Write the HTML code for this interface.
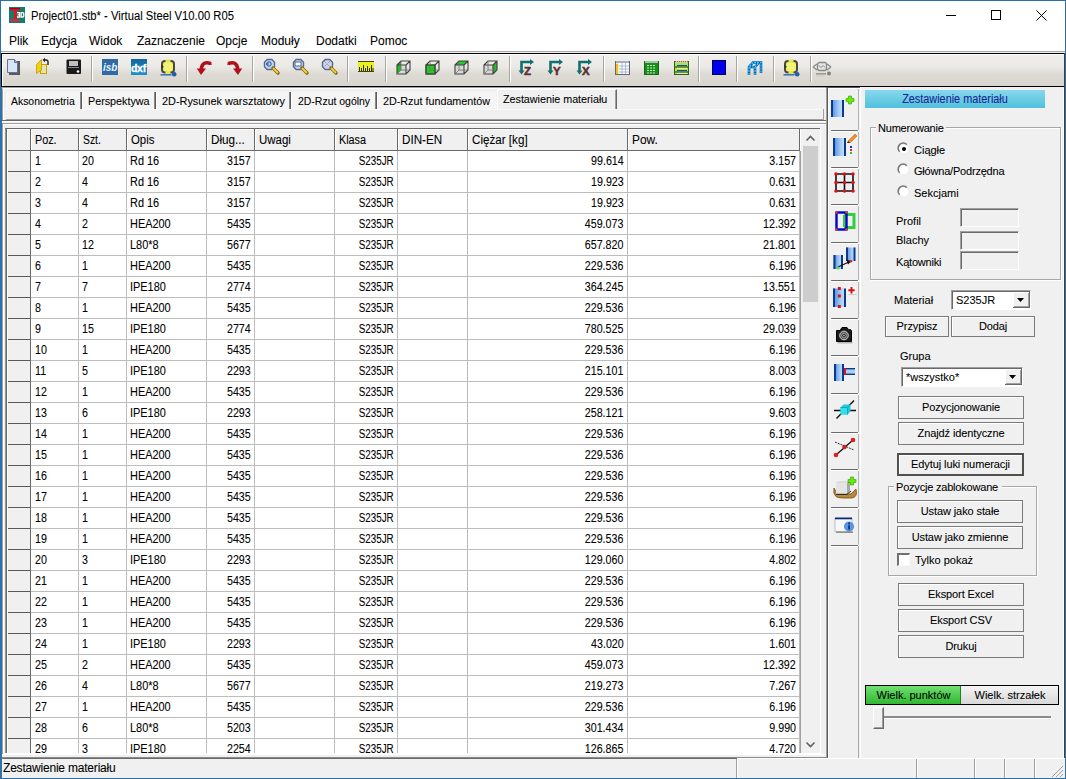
<!DOCTYPE html><html><head><meta charset="utf-8"><style>
*{margin:0;padding:0;box-sizing:border-box}
html,body{width:1066px;height:779px;overflow:hidden;background:#f0f0f0}
body{position:relative;font-family:"Liberation Sans",sans-serif;font-size:12px;color:#000}
div{position:absolute}
.t{white-space:nowrap;line-height:14px;height:14px;-webkit-text-stroke:0.08px #000}
.s{font-size:11px;line-height:13px;height:13px;letter-spacing:-0.1px}
.btn{border:1px solid #7a7a7a;background:#f0f0f0;box-shadow:inset 1px 1px 0 #fff}
.btn .t{width:100%;text-align:center}
svg{position:absolute;overflow:visible}
</style></head><body><div style="left:0px;top:0px;width:1066px;height:51px;background:#fff"></div>
<div style="left:0px;top:0px;width:1066px;height:1px;background:#2b6fab"></div>
<div style="left:0px;top:0px;width:1px;height:779px;background:#2b6fab"></div>
<div style="left:1065px;top:0px;width:1px;height:779px;background:#2b6fab"></div>
<div style="left:0px;top:778px;width:1066px;height:1px;background:#2b6fab"></div>
<svg style="left:9px;top:7px" width="16" height="16" viewBox="0 0 16 16"><rect width="16" height="16" fill="#17796f"/><rect x="1" y="1" width="10" height="2.5" fill="#e0101a"/><rect x="1" y="1" width="10" height="1" fill="#a00010"/><rect x="5" y="3.5" width="2.6" height="9" fill="#f01018"/><rect x="1" y="12" width="10" height="3" fill="#a04048"/><rect x="8" y="5" width="7" height="5.5" fill="#17796f"/><path d="M8 5.6H10.6V10H8M8.6 7.8H10.6" fill="none" stroke="#fff" stroke-width="1.3"/><path d="M12.2 5.6H13.8Q14.8 5.6 14.8 6.8V8.8Q14.8 10 13.8 10H12.2Z" fill="none" stroke="#fff" stroke-width="1.3"/></svg>
<div class="t" style="left:31px;top:9px;transform:scaleX(0.937);transform-origin:0 0">Project01.stb* - Virtual Steel V10.00 R05</div>
<div style="left:946px;top:15px;width:10px;height:1px;background:#000"></div>
<div style="left:991px;top:10px;width:10px;height:10px;border:1px solid #000"></div>
<svg style="left:1036px;top:10px" width="11" height="11" viewBox="0 0 11 11"><path d="M0.5 0.5L10.5 10.5M10.5 0.5L0.5 10.5" stroke="#000" stroke-width="1"/></svg>
<div class="t" style="left:9px;top:34px;">Plik</div>
<div class="t" style="left:41px;top:34px;">Edycja</div>
<div class="t" style="left:89px;top:34px;">Widok</div>
<div class="t" style="left:137px;top:34px;">Zaznaczenie</div>
<div class="t" style="left:216px;top:34px;">Opcje</div>
<div class="t" style="left:261px;top:34px;">Moduły</div>
<div class="t" style="left:316px;top:34px;">Dodatki</div>
<div class="t" style="left:370px;top:34px;">Pomoc</div>
<div style="left:1px;top:51px;width:1064px;height:1px;background:#a9a9a9"></div>
<div style="left:1px;top:53px;width:1064px;height:34px;border:1px solid #000;background:linear-gradient(#f1f0ee,#ebe9e5 40%,#dedbd5 62%,#d8d5cf);box-shadow:inset 1px 1px 0 #fff"></div>
<svg style="left:6px;top:58px" width="16" height="18" viewBox="0 0 16 18"><rect x="3" y="3" width="11" height="14" fill="#555a64"/><path d="M1.5 1.5H8.5L11.5 4.5V14.5H1.5Z" fill="#d6e5fa" stroke="#6a7384"/><path d="M8.5 1.5V4.5H11.5" fill="#9fb0c8" stroke="#6a7384"/></svg>
<svg style="left:35px;top:57px" width="16" height="18" viewBox="0 0 16 18"><rect x="5.5" y="7.5" width="6" height="9" fill="#f4e27a" stroke="#c8a000"/><rect x="7" y="9.5" width="3" height="5" fill="#d0e0f4"/><path d="M1.5 7.5L6.5 2.5V13L1.5 16.5Z" fill="#f0d010" stroke="#c09a00" stroke-width="0.8"/><path d="M13 8V4.8Q13 3 11 3H9.5" fill="none" stroke="#202020" stroke-width="1.4"/><path d="M7.5 3L10 0.8V5.2Z" fill="#202020"/></svg>
<svg style="left:66px;top:59px" width="16" height="16" viewBox="0 0 16 16"><rect x="0.5" y="0.5" width="14.5" height="14.5" rx="1" fill="#1a1a1a"/><rect x="3" y="2" width="9" height="5" fill="#c0c0c0"/><rect x="2" y="8" width="11" height="1" fill="#8a8a8a"/><circle cx="12" cy="12.5" r="1.3" fill="#fff"/></svg>
<div style="left:91px;top:56px;width:1px;height:26px;background:#a8a6a0"></div>
<div style="left:92px;top:56px;width:1px;height:26px;background:#fff"></div>
<svg style="left:102px;top:59px" width="16" height="16" viewBox="0 0 16 16"><rect width="16" height="16" fill="#2f6aa6"/><text x="1" y="12" font-family="Liberation Sans" font-size="10" font-weight="bold" font-style="italic" fill="#e8f2ff">isb</text></svg>
<svg style="left:131px;top:59px" width="16" height="16" viewBox="0 0 16 16"><defs><linearGradient id="gd" x1="0" y1="0" x2="0" y2="1"><stop offset="0" stop-color="#1464a0"/><stop offset="1" stop-color="#2090c8"/></linearGradient></defs><rect width="16" height="16" fill="url(#gd)"/><text x="0" y="12.5" font-family="Liberation Sans" font-size="10.5" font-weight="bold" fill="#fff" letter-spacing="-0.3" stroke="#fff" stroke-width="0.3">dxf</text></svg>
<svg style="left:160px;top:59px" width="17" height="18" viewBox="0 0 17 18"><rect x="2" y="2" width="12" height="11.5" rx="3" fill="#eef060" stroke="#4a4a44" stroke-width="2"/><rect x="5.5" y="0.5" width="5" height="3" fill="#e4e850"/><rect x="5.5" y="12" width="5" height="3" fill="#e4e850"/><rect x="4" y="4" width="8" height="8" fill="#f2f278"/><path d="M1 5.5L4 7.8L1 10Z" fill="#3a3a34"/><rect x="0.5" y="15" width="11" height="1.6" fill="#3a78c0"/><circle cx="14.2" cy="15.2" r="2.3" fill="#1a60b0"/></svg>
<div style="left:186px;top:56px;width:1px;height:26px;background:#a8a6a0"></div>
<div style="left:187px;top:56px;width:1px;height:26px;background:#fff"></div>
<svg style="left:196px;top:60px" width="16" height="16" viewBox="0 0 16 16"><path d="M14.5 3.5Q9 1.5 6.5 5Q5.3 7 5.5 9.5" fill="none" stroke="#b0101a" stroke-width="3.6"/><path d="M0.8 8.5L10 8.5L5 15Z" fill="#b0101a"/><path d="M14.5 2L15 5" stroke="#b0101a" stroke-width="1.5"/></svg>
<svg style="left:227px;top:60px" width="16" height="16" viewBox="0 0 16 16"><path d="M1.5 3.5Q7 1.5 9.5 5Q10.7 7 10.5 9.5" fill="none" stroke="#b0101a" stroke-width="3.6"/><path d="M15.2 8.5L6 8.5L11 15Z" fill="#b0101a"/><path d="M1.5 2L1 5" stroke="#b0101a" stroke-width="1.5"/></svg>
<div style="left:252px;top:56px;width:1px;height:26px;background:#a8a6a0"></div>
<div style="left:253px;top:56px;width:1px;height:26px;background:#fff"></div>
<svg style="left:263px;top:58px" width="17" height="18" viewBox="0 0 17 18"><path d="M4.2 1.5H8.8L11.5 4.2V8.8L8.8 11.5H4.2L1.5 8.8V4.2Z" fill="#c4d8f4" stroke="#5a6a88" stroke-width="1.4"/><circle cx="6" cy="6" r="2.2" fill="none" stroke="#2050a0"/><path d="M3 6H6" stroke="#2050a0"/><path d="M10 10L15 15" stroke="#806010" stroke-width="3.4" stroke-linecap="round"/><path d="M10 10L15 15" stroke="#f0d040" stroke-width="2"/></svg>
<svg style="left:292px;top:58px" width="17" height="18" viewBox="0 0 17 18"><path d="M4.2 1.5H8.8L11.5 4.2V8.8L8.8 11.5H4.2L1.5 8.8V4.2Z" fill="#c4d8f4" stroke="#5a6a88" stroke-width="1.4"/><rect x="3" y="4" width="6" height="4" fill="#fff" stroke="#5060a0"/><path d="M10 10L15 15" stroke="#806010" stroke-width="3.4" stroke-linecap="round"/><path d="M10 10L15 15" stroke="#f0d040" stroke-width="2"/></svg>
<svg style="left:321px;top:58px" width="17" height="18" viewBox="0 0 17 18"><path d="M4.2 1.5H8.8L11.5 4.2V8.8L8.8 11.5H4.2L1.5 8.8V4.2Z" fill="#c4d8f4" stroke="#5a6a88" stroke-width="1.4"/><path d="M3 3L9 9M9 3L3 9" stroke="#d06070" stroke-dasharray="1 1"/><path d="M10 10L15 15" stroke="#806010" stroke-width="3.4" stroke-linecap="round"/><path d="M10 10L15 15" stroke="#f0d040" stroke-width="2"/></svg>
<div style="left:347px;top:56px;width:1px;height:26px;background:#a8a6a0"></div>
<div style="left:348px;top:56px;width:1px;height:26px;background:#fff"></div>
<svg style="left:358px;top:61px" width="16" height="11" viewBox="0 0 16 11"><rect x="0" y="0" width="16" height="11" fill="#e8f020"/><rect x="0" y="0" width="16" height="1" fill="#404020"/><rect x="0" y="10" width="16" height="1" fill="#404020"/><path d="M1.5 10V6M3.5 10V7M5.5 10V4M7.5 10V7M9.5 10V5M11.5 10V7M13.5 10V4M15 10V7" stroke="#303010"/></svg>
<div style="left:385px;top:56px;width:1px;height:26px;background:#a8a6a0"></div>
<div style="left:386px;top:56px;width:1px;height:26px;background:#fff"></div>
<svg style="left:396px;top:60px" width="15" height="15" viewBox="0 0 15 15"><rect x="1" y="5" width="9" height="9" fill="#d8d8d8"/><path d="M1 5L5 1V10L1 14Z" fill="#20c020"/><path d="M1 5L5 1H14V10L10 14H1Z M1 5H10V14 M10 5L14 1" fill="none" stroke="#404040" stroke-width="1.1"/><path d="M5 1V10H14 M5 10L1 14" fill="none" stroke="#707070" stroke-width="0.8"/></svg>
<svg style="left:425px;top:60px" width="15" height="15" viewBox="0 0 15 15"><rect x="1" y="5" width="9" height="9" fill="#d8d8d8"/><rect x="1" y="5" width="9" height="9" fill="#20d020" stroke="#205020"/><path d="M1 5L5 1H14V10L10 14H1Z M1 5H10V14 M10 5L14 1" fill="none" stroke="#404040" stroke-width="1.1"/><path d="M5 1V10H14 M5 10L1 14" fill="none" stroke="#707070" stroke-width="0.8"/></svg>
<svg style="left:454px;top:60px" width="15" height="15" viewBox="0 0 15 15"><rect x="1" y="5" width="9" height="9" fill="#d8d8d8"/><path d="M1 5L5 1H14L10 5Z" fill="#20d020"/><path d="M1 5L5 1H14V10L10 14H1Z M1 5H10V14 M10 5L14 1" fill="none" stroke="#404040" stroke-width="1.1"/><path d="M5 1V10H14 M5 10L1 14" fill="none" stroke="#707070" stroke-width="0.8"/></svg>
<svg style="left:483px;top:60px" width="15" height="15" viewBox="0 0 15 15"><rect x="1" y="5" width="9" height="9" fill="#d8d8d8"/><path d="M10 5L14 1V10L10 14Z" fill="#20c020"/><path d="M1 5L5 1H14V10L10 14H1Z M1 5H10V14 M10 5L14 1" fill="none" stroke="#404040" stroke-width="1.1"/><path d="M5 1V10H14 M5 10L1 14" fill="none" stroke="#707070" stroke-width="0.8"/></svg>
<div style="left:509px;top:56px;width:1px;height:26px;background:#a8a6a0"></div>
<div style="left:510px;top:56px;width:1px;height:26px;background:#fff"></div>
<svg style="left:519px;top:59px" width="16" height="16" viewBox="0 0 16 16"><path d="M2.5 13V3H12" fill="none" stroke="#107070" stroke-width="2.6"/><path d="M11 0L15 3L11 6Z" fill="#107070"/><path d="M-0.5 11.5L2.5 15.5L5.5 11.5Z" fill="#107070"/><text x="5" y="15.5" font-family="Liberation Sans" font-size="11.5" font-weight="bold" fill="#5a3030" stroke="#5a3030" stroke-width="0.5">Z</text></svg>
<svg style="left:548px;top:59px" width="16" height="16" viewBox="0 0 16 16"><path d="M2.5 13V3H12" fill="none" stroke="#107070" stroke-width="2.6"/><path d="M11 0L15 3L11 6Z" fill="#107070"/><path d="M-0.5 11.5L2.5 15.5L5.5 11.5Z" fill="#107070"/><text x="5" y="15.5" font-family="Liberation Sans" font-size="11.5" font-weight="bold" fill="#5a3030" stroke="#5a3030" stroke-width="0.5">Y</text></svg>
<svg style="left:577px;top:59px" width="16" height="16" viewBox="0 0 16 16"><path d="M2.5 13V3H12" fill="none" stroke="#107070" stroke-width="2.6"/><path d="M11 0L15 3L11 6Z" fill="#107070"/><path d="M-0.5 11.5L2.5 15.5L5.5 11.5Z" fill="#107070"/><text x="5" y="15.5" font-family="Liberation Sans" font-size="11.5" font-weight="bold" fill="#5a3030" stroke="#5a3030" stroke-width="0.5">X</text></svg>
<div style="left:603px;top:56px;width:1px;height:26px;background:#a8a6a0"></div>
<div style="left:604px;top:56px;width:1px;height:26px;background:#fff"></div>
<svg style="left:615px;top:60px" width="15" height="16" viewBox="0 0 15 16"><rect x="0.5" y="1.5" width="14" height="13" fill="#f8f0a0" stroke="#606878"/><rect x="1" y="1" width="13" height="2" fill="#a8b0c0"/><rect x="4" y="3" width="10" height="11" fill="#fff"/><path d="M4 6H14M4 9H14M4 12H14M7 3V14M10.5 3V14" stroke="#a8b8d8"/><rect x="1" y="4" width="2" height="10" fill="#f0c020"/></svg>
<svg style="left:644px;top:60px" width="15" height="16" viewBox="0 0 15 16"><rect x="0.5" y="1.5" width="14" height="13" fill="#189018" stroke="#206020"/><rect x="1" y="1" width="13" height="2" fill="#a8c0b0"/><path d="M3 5.5H12M3 8H12M3 10.5H12M3 13H12" stroke="#c8f0c8" stroke-dasharray="2 1"/></svg>
<svg style="left:674px;top:60px" width="15" height="16" viewBox="0 0 15 16"><rect x="0.5" y="1.5" width="14" height="13" fill="#a8e840" stroke="#306020"/><rect x="1" y="1" width="13" height="2" fill="#c0d0b0"/><path d="M1 1.5H14" stroke="#e04040" stroke-dasharray="1 1"/><path d="M3 5.5H13M3 10.5H13" stroke="#1050a0"/><path d="M3 8H13M3 13H13" stroke="#fff"/><path d="M1 7H14M1 12H14" stroke="#202020"/></svg>
<div style="left:698px;top:56px;width:1px;height:26px;background:#a8a6a0"></div>
<div style="left:699px;top:56px;width:1px;height:26px;background:#fff"></div>
<svg style="left:712px;top:60px" width="14" height="15" viewBox="0 0 14 15"><rect x="0.5" y="0.5" width="13" height="14" fill="#0000f0" stroke="#000050"/></svg>
<div style="left:736px;top:56px;width:1px;height:26px;background:#a8a6a0"></div>
<div style="left:737px;top:56px;width:1px;height:26px;background:#fff"></div>
<svg style="left:746px;top:60px" width="17" height="16" viewBox="0 0 17 16"><path d="M3 15V7L7 2.5H15V13M9 15V7H3M9 7L13 2.5" fill="none" stroke="#0a60b0" stroke-width="2.6"/><path d="M3 15V7L7 2.5H15V13M9 15V7H3M9 7L13 2.5" fill="none" stroke="#30d0f8" stroke-width="1.2" stroke-dasharray="2 1"/></svg>
<div style="left:773px;top:56px;width:1px;height:26px;background:#a8a6a0"></div>
<div style="left:774px;top:56px;width:1px;height:26px;background:#fff"></div>
<svg style="left:783px;top:59px" width="17" height="18" viewBox="0 0 17 18"><rect x="2" y="2" width="12" height="11.5" rx="3" fill="#eef060" stroke="#4a4a44" stroke-width="2"/><rect x="5.5" y="0.5" width="5" height="3" fill="#e4e850"/><rect x="5.5" y="12" width="5" height="3" fill="#e4e850"/><rect x="4" y="4" width="8" height="8" fill="#f2f278"/><path d="M1 5.5L4 7.8L1 10Z" fill="#3a3a34"/><rect x="0.5" y="15" width="11" height="1.6" fill="#3a78c0"/><circle cx="14.2" cy="15.2" r="2.3" fill="#1a60b0"/></svg>
<div style="left:810px;top:56px;width:1px;height:26px;background:#a8a6a0"></div>
<div style="left:811px;top:56px;width:1px;height:26px;background:#fff"></div>
<svg style="left:812px;top:60px" width="20" height="17" viewBox="0 0 20 17"><path d="M1 7L5 4M1 7L5 10" stroke="#8a8a8a" stroke-width="1.4" fill="none"/><path d="M19 7L15 4M19 7L15 10" stroke="#8a8a8a" stroke-width="1.4" fill="none"/><rect x="5.5" y="2.5" width="9" height="8" rx="2" fill="#e4e4e4" stroke="#8a8a8a" stroke-width="1.3"/><path d="M7 5.5L9 7.5L11 5.5L13 7.5" stroke="#8a8a8a" fill="none"/><rect x="4" y="13" width="10" height="1.6" fill="#9a9a9a"/><circle cx="17" cy="13.5" r="2" fill="#808080"/><rect x="4" y="15.5" width="9" height="1" fill="#c8c8c8"/></svg>
<div style="left:1px;top:87px;width:825px;height:1px;background:#a0a0a0"></div>
<div style="left:2px;top:88px;width:824px;height:34px;border-top:1px solid #fff;border-left:1px solid #a0a0a0;box-shadow:inset 1px 0 0 #fff"></div>
<div style="left:2px;top:120px;width:824px;height:1px;background:#696969"></div>
<div style="left:2px;top:121px;width:826px;height:1px;background:#fff"></div>
<div style="left:6px;top:92px;width:74px;height:17px;background:#f5f5f5"></div>
<div class="t" style="left:11px;top:94px;font-size:11px;transform:scaleX(0.947);transform-origin:0 0">Aksonometria</div>
<div style="left:80px;top:92px;width:1px;height:17px;background:#8a8a8a"></div>
<div style="left:81px;top:92px;width:1px;height:17px;background:#5a5a5a"></div>
<div style="left:82px;top:92px;width:1px;height:17px;background:#fff"></div>
<div style="left:83px;top:92px;width:71px;height:17px;background:#f5f5f5"></div>
<div class="t" style="left:88px;top:94px;font-size:11px;transform:scaleX(0.978);transform-origin:0 0">Perspektywa</div>
<div style="left:154px;top:92px;width:1px;height:17px;background:#8a8a8a"></div>
<div style="left:155px;top:92px;width:1px;height:17px;background:#5a5a5a"></div>
<div style="left:156px;top:92px;width:1px;height:17px;background:#fff"></div>
<div style="left:157px;top:92px;width:132px;height:17px;background:#f5f5f5"></div>
<div class="t" style="left:162px;top:94px;font-size:11px;transform:scaleX(0.99);transform-origin:0 0">2D-Rysunek warsztatowy</div>
<div style="left:289px;top:92px;width:1px;height:17px;background:#8a8a8a"></div>
<div style="left:290px;top:92px;width:1px;height:17px;background:#5a5a5a"></div>
<div style="left:291px;top:92px;width:1px;height:17px;background:#fff"></div>
<div style="left:292px;top:92px;width:83px;height:17px;background:#f5f5f5"></div>
<div class="t" style="left:297.5px;top:94px;font-size:11px;transform:scaleX(0.951);transform-origin:0 0">2D-Rzut ogólny</div>
<div style="left:375px;top:92px;width:1px;height:17px;background:#8a8a8a"></div>
<div style="left:376px;top:92px;width:1px;height:17px;background:#5a5a5a"></div>
<div style="left:377px;top:92px;width:1px;height:17px;background:#fff"></div>
<div style="left:378px;top:92px;width:118px;height:17px;background:#f5f5f5"></div>
<div class="t" style="left:383px;top:94px;font-size:11px;transform:scaleX(0.978);transform-origin:0 0">2D-Rzut fundamentów</div>
<div style="left:497px;top:89px;width:120px;height:21px;background:#f0f0f0;border-left:1px solid #fff;border-top:1px solid #fff;border-right:1px solid #696969;box-shadow:inset -1px 0 0 #a0a0a0"></div>
<div class="t" style="left:503px;top:92px;font-size:11px;transform:scaleX(0.975);transform-origin:0 0">Zestawienie materiału</div>
<div style="left:5px;top:109px;width:820px;height:1px;background:#fafafa"></div>
<div style="left:6px;top:109px;width:818px;height:11px;border-right:1px solid #a0a0a0;border-bottom:1px solid #a0a0a0"></div>
<div style="left:2px;top:123px;width:826px;height:636px;border-top:1px solid #a0a0a0;border-left:1px solid #a0a0a0;border-right:1px solid #696969;border-bottom:1px solid #696969;box-shadow:inset 1px 1px 0 #fff, inset -1px -1px 0 #a0a0a0"></div>
<div style="left:5px;top:128px;width:816px;height:626px;background:#fff;border-top:1px solid #696969;border-left:1px solid #9a9a9a;box-shadow:inset 1px 0 0 #686868"></div>
<div style="left:7px;top:129px;width:1px;height:624px;background:#fff"></div>
<div style="left:8px;top:129px;width:792px;height:21px;background:#f0f0f0;border-top:1px solid #fff"></div>
<div style="left:8px;top:150px;width:792px;height:1px;background:#696969"></div>
<div style="left:8px;top:151px;width:22px;height:602px;background:#f0f0f0"></div>
<div style="left:30px;top:129px;width:1px;height:21px;background:#696969"></div>
<div style="left:31px;top:129px;width:1px;height:21px;background:#fff"></div>
<div style="left:30px;top:151px;width:1px;height:602px;background:#696969"></div>
<div style="left:78px;top:129px;width:1px;height:21px;background:#696969"></div>
<div style="left:79px;top:129px;width:1px;height:21px;background:#fff"></div>
<div style="left:78px;top:151px;width:1px;height:602px;background:#bdbdbd"></div>
<div style="left:126px;top:129px;width:1px;height:21px;background:#696969"></div>
<div style="left:127px;top:129px;width:1px;height:21px;background:#fff"></div>
<div style="left:126px;top:151px;width:1px;height:602px;background:#bdbdbd"></div>
<div style="left:206px;top:129px;width:1px;height:21px;background:#696969"></div>
<div style="left:207px;top:129px;width:1px;height:21px;background:#fff"></div>
<div style="left:206px;top:151px;width:1px;height:602px;background:#bdbdbd"></div>
<div style="left:254px;top:129px;width:1px;height:21px;background:#696969"></div>
<div style="left:255px;top:129px;width:1px;height:21px;background:#fff"></div>
<div style="left:254px;top:151px;width:1px;height:602px;background:#bdbdbd"></div>
<div style="left:334px;top:129px;width:1px;height:21px;background:#696969"></div>
<div style="left:335px;top:129px;width:1px;height:21px;background:#fff"></div>
<div style="left:334px;top:151px;width:1px;height:602px;background:#bdbdbd"></div>
<div style="left:397px;top:129px;width:1px;height:21px;background:#696969"></div>
<div style="left:398px;top:129px;width:1px;height:21px;background:#fff"></div>
<div style="left:397px;top:151px;width:1px;height:602px;background:#bdbdbd"></div>
<div style="left:467px;top:129px;width:1px;height:21px;background:#696969"></div>
<div style="left:468px;top:129px;width:1px;height:21px;background:#fff"></div>
<div style="left:467px;top:151px;width:1px;height:602px;background:#bdbdbd"></div>
<div style="left:627px;top:129px;width:1px;height:21px;background:#696969"></div>
<div style="left:628px;top:129px;width:1px;height:21px;background:#fff"></div>
<div style="left:627px;top:151px;width:1px;height:602px;background:#bdbdbd"></div>
<div style="left:799px;top:129px;width:1px;height:21px;background:#696969"></div>
<div style="left:799px;top:151px;width:1px;height:602px;background:#bdbdbd"></div>
<div style="left:800px;top:151px;width:1px;height:602px;background:#a0a0a0"></div>
<div class="t" style="left:35px;top:133px;transform:scaleX(0.9);transform-origin:0 0">Poz.</div>
<div class="t" style="left:83px;top:133px;transform:scaleX(0.86);transform-origin:0 0">Szt.</div>
<div class="t" style="left:131px;top:133px;transform:scaleX(0.95);transform-origin:0 0">Opis</div>
<div class="t" style="left:211px;top:133px;transform:scaleX(0.975);transform-origin:0 0">Dług...</div>
<div class="t" style="left:259px;top:133px;transform:scaleX(0.955);transform-origin:0 0">Uwagi</div>
<div class="t" style="left:339px;top:133px;transform:scaleX(0.9);transform-origin:0 0">Klasa</div>
<div class="t" style="left:402px;top:133px;transform:scaleX(0.97);transform-origin:0 0">DIN-EN</div>
<div class="t" style="left:472px;top:133px;transform:scaleX(0.97);transform-origin:0 0">Ciężar [kg]</div>
<div class="t" style="left:632px;top:133px;transform:scaleX(0.99);transform-origin:0 0">Pow.</div>
<div style="left:8px;top:171px;width:22px;height:1px;background:#5a5a5a"></div>
<div style="left:31px;top:171px;width:769px;height:1px;background:#bdbdbd"></div>
<div class="t" style="left:35px;top:154px;transform:scaleX(0.89);transform-origin:0 0">1</div>
<div class="t" style="left:82px;top:154px;transform:scaleX(0.89);transform-origin:0 0">20</div>
<div class="t" style="left:130px;top:154px;transform:scaleX(0.91);transform-origin:0 0">Rd 16</div>
<div class="t" style="right:815.5px;top:154px;transform:scaleX(0.89);transform-origin:100% 0">3157</div>
<div class="t" style="right:672px;top:154px;transform:scaleX(0.82);transform-origin:100% 0">S235JR</div>
<div class="t" style="right:442.20000000000005px;top:154px;transform:scaleX(0.89);transform-origin:100% 0">99.614</div>
<div class="t" style="right:270px;top:154px;transform:scaleX(0.89);transform-origin:100% 0">3.157</div>
<div style="left:8px;top:192px;width:22px;height:1px;background:#5a5a5a"></div>
<div style="left:31px;top:192px;width:769px;height:1px;background:#bdbdbd"></div>
<div class="t" style="left:35px;top:175px;transform:scaleX(0.89);transform-origin:0 0">2</div>
<div class="t" style="left:82px;top:175px;transform:scaleX(0.89);transform-origin:0 0">4</div>
<div class="t" style="left:130px;top:175px;transform:scaleX(0.91);transform-origin:0 0">Rd 16</div>
<div class="t" style="right:815.5px;top:175px;transform:scaleX(0.89);transform-origin:100% 0">3157</div>
<div class="t" style="right:672px;top:175px;transform:scaleX(0.82);transform-origin:100% 0">S235JR</div>
<div class="t" style="right:442.20000000000005px;top:175px;transform:scaleX(0.89);transform-origin:100% 0">19.923</div>
<div class="t" style="right:270px;top:175px;transform:scaleX(0.89);transform-origin:100% 0">0.631</div>
<div style="left:8px;top:213px;width:22px;height:1px;background:#5a5a5a"></div>
<div style="left:31px;top:213px;width:769px;height:1px;background:#bdbdbd"></div>
<div class="t" style="left:35px;top:196px;transform:scaleX(0.89);transform-origin:0 0">3</div>
<div class="t" style="left:82px;top:196px;transform:scaleX(0.89);transform-origin:0 0">4</div>
<div class="t" style="left:130px;top:196px;transform:scaleX(0.91);transform-origin:0 0">Rd 16</div>
<div class="t" style="right:815.5px;top:196px;transform:scaleX(0.89);transform-origin:100% 0">3157</div>
<div class="t" style="right:672px;top:196px;transform:scaleX(0.82);transform-origin:100% 0">S235JR</div>
<div class="t" style="right:442.20000000000005px;top:196px;transform:scaleX(0.89);transform-origin:100% 0">19.923</div>
<div class="t" style="right:270px;top:196px;transform:scaleX(0.89);transform-origin:100% 0">0.631</div>
<div style="left:8px;top:234px;width:22px;height:1px;background:#5a5a5a"></div>
<div style="left:31px;top:234px;width:769px;height:1px;background:#bdbdbd"></div>
<div class="t" style="left:35px;top:217px;transform:scaleX(0.89);transform-origin:0 0">4</div>
<div class="t" style="left:82px;top:217px;transform:scaleX(0.89);transform-origin:0 0">2</div>
<div class="t" style="left:130px;top:217px;transform:scaleX(0.91);transform-origin:0 0">HEA200</div>
<div class="t" style="right:815.5px;top:217px;transform:scaleX(0.89);transform-origin:100% 0">5435</div>
<div class="t" style="right:672px;top:217px;transform:scaleX(0.82);transform-origin:100% 0">S235JR</div>
<div class="t" style="right:442.20000000000005px;top:217px;transform:scaleX(0.89);transform-origin:100% 0">459.073</div>
<div class="t" style="right:270px;top:217px;transform:scaleX(0.89);transform-origin:100% 0">12.392</div>
<div style="left:8px;top:255px;width:22px;height:1px;background:#5a5a5a"></div>
<div style="left:31px;top:255px;width:769px;height:1px;background:#bdbdbd"></div>
<div class="t" style="left:35px;top:238px;transform:scaleX(0.89);transform-origin:0 0">5</div>
<div class="t" style="left:82px;top:238px;transform:scaleX(0.89);transform-origin:0 0">12</div>
<div class="t" style="left:130px;top:238px;transform:scaleX(0.91);transform-origin:0 0">L80*8</div>
<div class="t" style="right:815.5px;top:238px;transform:scaleX(0.89);transform-origin:100% 0">5677</div>
<div class="t" style="right:672px;top:238px;transform:scaleX(0.82);transform-origin:100% 0">S235JR</div>
<div class="t" style="right:442.20000000000005px;top:238px;transform:scaleX(0.89);transform-origin:100% 0">657.820</div>
<div class="t" style="right:270px;top:238px;transform:scaleX(0.89);transform-origin:100% 0">21.801</div>
<div style="left:8px;top:276px;width:22px;height:1px;background:#5a5a5a"></div>
<div style="left:31px;top:276px;width:769px;height:1px;background:#bdbdbd"></div>
<div class="t" style="left:35px;top:259px;transform:scaleX(0.89);transform-origin:0 0">6</div>
<div class="t" style="left:82px;top:259px;transform:scaleX(0.89);transform-origin:0 0">1</div>
<div class="t" style="left:130px;top:259px;transform:scaleX(0.91);transform-origin:0 0">HEA200</div>
<div class="t" style="right:815.5px;top:259px;transform:scaleX(0.89);transform-origin:100% 0">5435</div>
<div class="t" style="right:672px;top:259px;transform:scaleX(0.82);transform-origin:100% 0">S235JR</div>
<div class="t" style="right:442.20000000000005px;top:259px;transform:scaleX(0.89);transform-origin:100% 0">229.536</div>
<div class="t" style="right:270px;top:259px;transform:scaleX(0.89);transform-origin:100% 0">6.196</div>
<div style="left:8px;top:297px;width:22px;height:1px;background:#5a5a5a"></div>
<div style="left:31px;top:297px;width:769px;height:1px;background:#bdbdbd"></div>
<div class="t" style="left:35px;top:280px;transform:scaleX(0.89);transform-origin:0 0">7</div>
<div class="t" style="left:82px;top:280px;transform:scaleX(0.89);transform-origin:0 0">7</div>
<div class="t" style="left:130px;top:280px;transform:scaleX(0.91);transform-origin:0 0">IPE180</div>
<div class="t" style="right:815.5px;top:280px;transform:scaleX(0.89);transform-origin:100% 0">2774</div>
<div class="t" style="right:672px;top:280px;transform:scaleX(0.82);transform-origin:100% 0">S235JR</div>
<div class="t" style="right:442.20000000000005px;top:280px;transform:scaleX(0.89);transform-origin:100% 0">364.245</div>
<div class="t" style="right:270px;top:280px;transform:scaleX(0.89);transform-origin:100% 0">13.551</div>
<div style="left:8px;top:318px;width:22px;height:1px;background:#5a5a5a"></div>
<div style="left:31px;top:318px;width:769px;height:1px;background:#bdbdbd"></div>
<div class="t" style="left:35px;top:301px;transform:scaleX(0.89);transform-origin:0 0">8</div>
<div class="t" style="left:82px;top:301px;transform:scaleX(0.89);transform-origin:0 0">1</div>
<div class="t" style="left:130px;top:301px;transform:scaleX(0.91);transform-origin:0 0">HEA200</div>
<div class="t" style="right:815.5px;top:301px;transform:scaleX(0.89);transform-origin:100% 0">5435</div>
<div class="t" style="right:672px;top:301px;transform:scaleX(0.82);transform-origin:100% 0">S235JR</div>
<div class="t" style="right:442.20000000000005px;top:301px;transform:scaleX(0.89);transform-origin:100% 0">229.536</div>
<div class="t" style="right:270px;top:301px;transform:scaleX(0.89);transform-origin:100% 0">6.196</div>
<div style="left:8px;top:339px;width:22px;height:1px;background:#5a5a5a"></div>
<div style="left:31px;top:339px;width:769px;height:1px;background:#bdbdbd"></div>
<div class="t" style="left:35px;top:322px;transform:scaleX(0.89);transform-origin:0 0">9</div>
<div class="t" style="left:82px;top:322px;transform:scaleX(0.89);transform-origin:0 0">15</div>
<div class="t" style="left:130px;top:322px;transform:scaleX(0.91);transform-origin:0 0">IPE180</div>
<div class="t" style="right:815.5px;top:322px;transform:scaleX(0.89);transform-origin:100% 0">2774</div>
<div class="t" style="right:672px;top:322px;transform:scaleX(0.82);transform-origin:100% 0">S235JR</div>
<div class="t" style="right:442.20000000000005px;top:322px;transform:scaleX(0.89);transform-origin:100% 0">780.525</div>
<div class="t" style="right:270px;top:322px;transform:scaleX(0.89);transform-origin:100% 0">29.039</div>
<div style="left:8px;top:360px;width:22px;height:1px;background:#5a5a5a"></div>
<div style="left:31px;top:360px;width:769px;height:1px;background:#bdbdbd"></div>
<div class="t" style="left:35px;top:343px;transform:scaleX(0.89);transform-origin:0 0">10</div>
<div class="t" style="left:82px;top:343px;transform:scaleX(0.89);transform-origin:0 0">1</div>
<div class="t" style="left:130px;top:343px;transform:scaleX(0.91);transform-origin:0 0">HEA200</div>
<div class="t" style="right:815.5px;top:343px;transform:scaleX(0.89);transform-origin:100% 0">5435</div>
<div class="t" style="right:672px;top:343px;transform:scaleX(0.82);transform-origin:100% 0">S235JR</div>
<div class="t" style="right:442.20000000000005px;top:343px;transform:scaleX(0.89);transform-origin:100% 0">229.536</div>
<div class="t" style="right:270px;top:343px;transform:scaleX(0.89);transform-origin:100% 0">6.196</div>
<div style="left:8px;top:381px;width:22px;height:1px;background:#5a5a5a"></div>
<div style="left:31px;top:381px;width:769px;height:1px;background:#bdbdbd"></div>
<div class="t" style="left:35px;top:364px;transform:scaleX(0.89);transform-origin:0 0">11</div>
<div class="t" style="left:82px;top:364px;transform:scaleX(0.89);transform-origin:0 0">5</div>
<div class="t" style="left:130px;top:364px;transform:scaleX(0.91);transform-origin:0 0">IPE180</div>
<div class="t" style="right:815.5px;top:364px;transform:scaleX(0.89);transform-origin:100% 0">2293</div>
<div class="t" style="right:672px;top:364px;transform:scaleX(0.82);transform-origin:100% 0">S235JR</div>
<div class="t" style="right:442.20000000000005px;top:364px;transform:scaleX(0.89);transform-origin:100% 0">215.101</div>
<div class="t" style="right:270px;top:364px;transform:scaleX(0.89);transform-origin:100% 0">8.003</div>
<div style="left:8px;top:402px;width:22px;height:1px;background:#5a5a5a"></div>
<div style="left:31px;top:402px;width:769px;height:1px;background:#bdbdbd"></div>
<div class="t" style="left:35px;top:385px;transform:scaleX(0.89);transform-origin:0 0">12</div>
<div class="t" style="left:82px;top:385px;transform:scaleX(0.89);transform-origin:0 0">1</div>
<div class="t" style="left:130px;top:385px;transform:scaleX(0.91);transform-origin:0 0">HEA200</div>
<div class="t" style="right:815.5px;top:385px;transform:scaleX(0.89);transform-origin:100% 0">5435</div>
<div class="t" style="right:672px;top:385px;transform:scaleX(0.82);transform-origin:100% 0">S235JR</div>
<div class="t" style="right:442.20000000000005px;top:385px;transform:scaleX(0.89);transform-origin:100% 0">229.536</div>
<div class="t" style="right:270px;top:385px;transform:scaleX(0.89);transform-origin:100% 0">6.196</div>
<div style="left:8px;top:423px;width:22px;height:1px;background:#5a5a5a"></div>
<div style="left:31px;top:423px;width:769px;height:1px;background:#bdbdbd"></div>
<div class="t" style="left:35px;top:406px;transform:scaleX(0.89);transform-origin:0 0">13</div>
<div class="t" style="left:82px;top:406px;transform:scaleX(0.89);transform-origin:0 0">6</div>
<div class="t" style="left:130px;top:406px;transform:scaleX(0.91);transform-origin:0 0">IPE180</div>
<div class="t" style="right:815.5px;top:406px;transform:scaleX(0.89);transform-origin:100% 0">2293</div>
<div class="t" style="right:672px;top:406px;transform:scaleX(0.82);transform-origin:100% 0">S235JR</div>
<div class="t" style="right:442.20000000000005px;top:406px;transform:scaleX(0.89);transform-origin:100% 0">258.121</div>
<div class="t" style="right:270px;top:406px;transform:scaleX(0.89);transform-origin:100% 0">9.603</div>
<div style="left:8px;top:444px;width:22px;height:1px;background:#5a5a5a"></div>
<div style="left:31px;top:444px;width:769px;height:1px;background:#bdbdbd"></div>
<div class="t" style="left:35px;top:427px;transform:scaleX(0.89);transform-origin:0 0">14</div>
<div class="t" style="left:82px;top:427px;transform:scaleX(0.89);transform-origin:0 0">1</div>
<div class="t" style="left:130px;top:427px;transform:scaleX(0.91);transform-origin:0 0">HEA200</div>
<div class="t" style="right:815.5px;top:427px;transform:scaleX(0.89);transform-origin:100% 0">5435</div>
<div class="t" style="right:672px;top:427px;transform:scaleX(0.82);transform-origin:100% 0">S235JR</div>
<div class="t" style="right:442.20000000000005px;top:427px;transform:scaleX(0.89);transform-origin:100% 0">229.536</div>
<div class="t" style="right:270px;top:427px;transform:scaleX(0.89);transform-origin:100% 0">6.196</div>
<div style="left:8px;top:465px;width:22px;height:1px;background:#5a5a5a"></div>
<div style="left:31px;top:465px;width:769px;height:1px;background:#bdbdbd"></div>
<div class="t" style="left:35px;top:448px;transform:scaleX(0.89);transform-origin:0 0">15</div>
<div class="t" style="left:82px;top:448px;transform:scaleX(0.89);transform-origin:0 0">1</div>
<div class="t" style="left:130px;top:448px;transform:scaleX(0.91);transform-origin:0 0">HEA200</div>
<div class="t" style="right:815.5px;top:448px;transform:scaleX(0.89);transform-origin:100% 0">5435</div>
<div class="t" style="right:672px;top:448px;transform:scaleX(0.82);transform-origin:100% 0">S235JR</div>
<div class="t" style="right:442.20000000000005px;top:448px;transform:scaleX(0.89);transform-origin:100% 0">229.536</div>
<div class="t" style="right:270px;top:448px;transform:scaleX(0.89);transform-origin:100% 0">6.196</div>
<div style="left:8px;top:486px;width:22px;height:1px;background:#5a5a5a"></div>
<div style="left:31px;top:486px;width:769px;height:1px;background:#bdbdbd"></div>
<div class="t" style="left:35px;top:469px;transform:scaleX(0.89);transform-origin:0 0">16</div>
<div class="t" style="left:82px;top:469px;transform:scaleX(0.89);transform-origin:0 0">1</div>
<div class="t" style="left:130px;top:469px;transform:scaleX(0.91);transform-origin:0 0">HEA200</div>
<div class="t" style="right:815.5px;top:469px;transform:scaleX(0.89);transform-origin:100% 0">5435</div>
<div class="t" style="right:672px;top:469px;transform:scaleX(0.82);transform-origin:100% 0">S235JR</div>
<div class="t" style="right:442.20000000000005px;top:469px;transform:scaleX(0.89);transform-origin:100% 0">229.536</div>
<div class="t" style="right:270px;top:469px;transform:scaleX(0.89);transform-origin:100% 0">6.196</div>
<div style="left:8px;top:507px;width:22px;height:1px;background:#5a5a5a"></div>
<div style="left:31px;top:507px;width:769px;height:1px;background:#bdbdbd"></div>
<div class="t" style="left:35px;top:490px;transform:scaleX(0.89);transform-origin:0 0">17</div>
<div class="t" style="left:82px;top:490px;transform:scaleX(0.89);transform-origin:0 0">1</div>
<div class="t" style="left:130px;top:490px;transform:scaleX(0.91);transform-origin:0 0">HEA200</div>
<div class="t" style="right:815.5px;top:490px;transform:scaleX(0.89);transform-origin:100% 0">5435</div>
<div class="t" style="right:672px;top:490px;transform:scaleX(0.82);transform-origin:100% 0">S235JR</div>
<div class="t" style="right:442.20000000000005px;top:490px;transform:scaleX(0.89);transform-origin:100% 0">229.536</div>
<div class="t" style="right:270px;top:490px;transform:scaleX(0.89);transform-origin:100% 0">6.196</div>
<div style="left:8px;top:528px;width:22px;height:1px;background:#5a5a5a"></div>
<div style="left:31px;top:528px;width:769px;height:1px;background:#bdbdbd"></div>
<div class="t" style="left:35px;top:511px;transform:scaleX(0.89);transform-origin:0 0">18</div>
<div class="t" style="left:82px;top:511px;transform:scaleX(0.89);transform-origin:0 0">1</div>
<div class="t" style="left:130px;top:511px;transform:scaleX(0.91);transform-origin:0 0">HEA200</div>
<div class="t" style="right:815.5px;top:511px;transform:scaleX(0.89);transform-origin:100% 0">5435</div>
<div class="t" style="right:672px;top:511px;transform:scaleX(0.82);transform-origin:100% 0">S235JR</div>
<div class="t" style="right:442.20000000000005px;top:511px;transform:scaleX(0.89);transform-origin:100% 0">229.536</div>
<div class="t" style="right:270px;top:511px;transform:scaleX(0.89);transform-origin:100% 0">6.196</div>
<div style="left:8px;top:549px;width:22px;height:1px;background:#5a5a5a"></div>
<div style="left:31px;top:549px;width:769px;height:1px;background:#bdbdbd"></div>
<div class="t" style="left:35px;top:532px;transform:scaleX(0.89);transform-origin:0 0">19</div>
<div class="t" style="left:82px;top:532px;transform:scaleX(0.89);transform-origin:0 0">1</div>
<div class="t" style="left:130px;top:532px;transform:scaleX(0.91);transform-origin:0 0">HEA200</div>
<div class="t" style="right:815.5px;top:532px;transform:scaleX(0.89);transform-origin:100% 0">5435</div>
<div class="t" style="right:672px;top:532px;transform:scaleX(0.82);transform-origin:100% 0">S235JR</div>
<div class="t" style="right:442.20000000000005px;top:532px;transform:scaleX(0.89);transform-origin:100% 0">229.536</div>
<div class="t" style="right:270px;top:532px;transform:scaleX(0.89);transform-origin:100% 0">6.196</div>
<div style="left:8px;top:570px;width:22px;height:1px;background:#5a5a5a"></div>
<div style="left:31px;top:570px;width:769px;height:1px;background:#bdbdbd"></div>
<div class="t" style="left:35px;top:553px;transform:scaleX(0.89);transform-origin:0 0">20</div>
<div class="t" style="left:82px;top:553px;transform:scaleX(0.89);transform-origin:0 0">3</div>
<div class="t" style="left:130px;top:553px;transform:scaleX(0.91);transform-origin:0 0">IPE180</div>
<div class="t" style="right:815.5px;top:553px;transform:scaleX(0.89);transform-origin:100% 0">2293</div>
<div class="t" style="right:672px;top:553px;transform:scaleX(0.82);transform-origin:100% 0">S235JR</div>
<div class="t" style="right:442.20000000000005px;top:553px;transform:scaleX(0.89);transform-origin:100% 0">129.060</div>
<div class="t" style="right:270px;top:553px;transform:scaleX(0.89);transform-origin:100% 0">4.802</div>
<div style="left:8px;top:591px;width:22px;height:1px;background:#5a5a5a"></div>
<div style="left:31px;top:591px;width:769px;height:1px;background:#bdbdbd"></div>
<div class="t" style="left:35px;top:574px;transform:scaleX(0.89);transform-origin:0 0">21</div>
<div class="t" style="left:82px;top:574px;transform:scaleX(0.89);transform-origin:0 0">1</div>
<div class="t" style="left:130px;top:574px;transform:scaleX(0.91);transform-origin:0 0">HEA200</div>
<div class="t" style="right:815.5px;top:574px;transform:scaleX(0.89);transform-origin:100% 0">5435</div>
<div class="t" style="right:672px;top:574px;transform:scaleX(0.82);transform-origin:100% 0">S235JR</div>
<div class="t" style="right:442.20000000000005px;top:574px;transform:scaleX(0.89);transform-origin:100% 0">229.536</div>
<div class="t" style="right:270px;top:574px;transform:scaleX(0.89);transform-origin:100% 0">6.196</div>
<div style="left:8px;top:612px;width:22px;height:1px;background:#5a5a5a"></div>
<div style="left:31px;top:612px;width:769px;height:1px;background:#bdbdbd"></div>
<div class="t" style="left:35px;top:595px;transform:scaleX(0.89);transform-origin:0 0">22</div>
<div class="t" style="left:82px;top:595px;transform:scaleX(0.89);transform-origin:0 0">1</div>
<div class="t" style="left:130px;top:595px;transform:scaleX(0.91);transform-origin:0 0">HEA200</div>
<div class="t" style="right:815.5px;top:595px;transform:scaleX(0.89);transform-origin:100% 0">5435</div>
<div class="t" style="right:672px;top:595px;transform:scaleX(0.82);transform-origin:100% 0">S235JR</div>
<div class="t" style="right:442.20000000000005px;top:595px;transform:scaleX(0.89);transform-origin:100% 0">229.536</div>
<div class="t" style="right:270px;top:595px;transform:scaleX(0.89);transform-origin:100% 0">6.196</div>
<div style="left:8px;top:633px;width:22px;height:1px;background:#5a5a5a"></div>
<div style="left:31px;top:633px;width:769px;height:1px;background:#bdbdbd"></div>
<div class="t" style="left:35px;top:616px;transform:scaleX(0.89);transform-origin:0 0">23</div>
<div class="t" style="left:82px;top:616px;transform:scaleX(0.89);transform-origin:0 0">1</div>
<div class="t" style="left:130px;top:616px;transform:scaleX(0.91);transform-origin:0 0">HEA200</div>
<div class="t" style="right:815.5px;top:616px;transform:scaleX(0.89);transform-origin:100% 0">5435</div>
<div class="t" style="right:672px;top:616px;transform:scaleX(0.82);transform-origin:100% 0">S235JR</div>
<div class="t" style="right:442.20000000000005px;top:616px;transform:scaleX(0.89);transform-origin:100% 0">229.536</div>
<div class="t" style="right:270px;top:616px;transform:scaleX(0.89);transform-origin:100% 0">6.196</div>
<div style="left:8px;top:654px;width:22px;height:1px;background:#5a5a5a"></div>
<div style="left:31px;top:654px;width:769px;height:1px;background:#bdbdbd"></div>
<div class="t" style="left:35px;top:637px;transform:scaleX(0.89);transform-origin:0 0">24</div>
<div class="t" style="left:82px;top:637px;transform:scaleX(0.89);transform-origin:0 0">1</div>
<div class="t" style="left:130px;top:637px;transform:scaleX(0.91);transform-origin:0 0">IPE180</div>
<div class="t" style="right:815.5px;top:637px;transform:scaleX(0.89);transform-origin:100% 0">2293</div>
<div class="t" style="right:672px;top:637px;transform:scaleX(0.82);transform-origin:100% 0">S235JR</div>
<div class="t" style="right:442.20000000000005px;top:637px;transform:scaleX(0.89);transform-origin:100% 0">43.020</div>
<div class="t" style="right:270px;top:637px;transform:scaleX(0.89);transform-origin:100% 0">1.601</div>
<div style="left:8px;top:675px;width:22px;height:1px;background:#5a5a5a"></div>
<div style="left:31px;top:675px;width:769px;height:1px;background:#bdbdbd"></div>
<div class="t" style="left:35px;top:658px;transform:scaleX(0.89);transform-origin:0 0">25</div>
<div class="t" style="left:82px;top:658px;transform:scaleX(0.89);transform-origin:0 0">2</div>
<div class="t" style="left:130px;top:658px;transform:scaleX(0.91);transform-origin:0 0">HEA200</div>
<div class="t" style="right:815.5px;top:658px;transform:scaleX(0.89);transform-origin:100% 0">5435</div>
<div class="t" style="right:672px;top:658px;transform:scaleX(0.82);transform-origin:100% 0">S235JR</div>
<div class="t" style="right:442.20000000000005px;top:658px;transform:scaleX(0.89);transform-origin:100% 0">459.073</div>
<div class="t" style="right:270px;top:658px;transform:scaleX(0.89);transform-origin:100% 0">12.392</div>
<div style="left:8px;top:696px;width:22px;height:1px;background:#5a5a5a"></div>
<div style="left:31px;top:696px;width:769px;height:1px;background:#bdbdbd"></div>
<div class="t" style="left:35px;top:679px;transform:scaleX(0.89);transform-origin:0 0">26</div>
<div class="t" style="left:82px;top:679px;transform:scaleX(0.89);transform-origin:0 0">4</div>
<div class="t" style="left:130px;top:679px;transform:scaleX(0.91);transform-origin:0 0">L80*8</div>
<div class="t" style="right:815.5px;top:679px;transform:scaleX(0.89);transform-origin:100% 0">5677</div>
<div class="t" style="right:672px;top:679px;transform:scaleX(0.82);transform-origin:100% 0">S235JR</div>
<div class="t" style="right:442.20000000000005px;top:679px;transform:scaleX(0.89);transform-origin:100% 0">219.273</div>
<div class="t" style="right:270px;top:679px;transform:scaleX(0.89);transform-origin:100% 0">7.267</div>
<div style="left:8px;top:717px;width:22px;height:1px;background:#5a5a5a"></div>
<div style="left:31px;top:717px;width:769px;height:1px;background:#bdbdbd"></div>
<div class="t" style="left:35px;top:700px;transform:scaleX(0.89);transform-origin:0 0">27</div>
<div class="t" style="left:82px;top:700px;transform:scaleX(0.89);transform-origin:0 0">1</div>
<div class="t" style="left:130px;top:700px;transform:scaleX(0.91);transform-origin:0 0">HEA200</div>
<div class="t" style="right:815.5px;top:700px;transform:scaleX(0.89);transform-origin:100% 0">5435</div>
<div class="t" style="right:672px;top:700px;transform:scaleX(0.82);transform-origin:100% 0">S235JR</div>
<div class="t" style="right:442.20000000000005px;top:700px;transform:scaleX(0.89);transform-origin:100% 0">229.536</div>
<div class="t" style="right:270px;top:700px;transform:scaleX(0.89);transform-origin:100% 0">6.196</div>
<div style="left:8px;top:738px;width:22px;height:1px;background:#5a5a5a"></div>
<div style="left:31px;top:738px;width:769px;height:1px;background:#bdbdbd"></div>
<div class="t" style="left:35px;top:721px;transform:scaleX(0.89);transform-origin:0 0">28</div>
<div class="t" style="left:82px;top:721px;transform:scaleX(0.89);transform-origin:0 0">6</div>
<div class="t" style="left:130px;top:721px;transform:scaleX(0.91);transform-origin:0 0">L80*8</div>
<div class="t" style="right:815.5px;top:721px;transform:scaleX(0.89);transform-origin:100% 0">5203</div>
<div class="t" style="right:672px;top:721px;transform:scaleX(0.82);transform-origin:100% 0">S235JR</div>
<div class="t" style="right:442.20000000000005px;top:721px;transform:scaleX(0.89);transform-origin:100% 0">301.434</div>
<div class="t" style="right:270px;top:721px;transform:scaleX(0.89);transform-origin:100% 0">9.990</div>
<div class="t" style="left:35px;top:742px;transform:scaleX(0.89);transform-origin:0 0">29</div>
<div class="t" style="left:82px;top:742px;transform:scaleX(0.89);transform-origin:0 0">3</div>
<div class="t" style="left:130px;top:742px;transform:scaleX(0.91);transform-origin:0 0">IPE180</div>
<div class="t" style="right:815.5px;top:742px;transform:scaleX(0.89);transform-origin:100% 0">2254</div>
<div class="t" style="right:672px;top:742px;transform:scaleX(0.82);transform-origin:100% 0">S235JR</div>
<div class="t" style="right:442.20000000000005px;top:742px;transform:scaleX(0.89);transform-origin:100% 0">126.865</div>
<div class="t" style="right:270px;top:742px;transform:scaleX(0.89);transform-origin:100% 0">4.720</div>
<div style="left:5px;top:753px;width:816px;height:1px;background:#fff"></div>
<div style="left:2px;top:754px;width:826px;height:4px;background:#f0f0f0"></div>
<div style="left:2px;top:754px;width:826px;height:1px;background:#fff"></div>
<div style="left:2px;top:757px;width:826px;height:1px;background:#8c8c8c"></div>
<div style="left:801px;top:129px;width:19px;height:624px;background:#f0f0f0"></div>
<div style="left:803px;top:146px;width:15px;height:156px;background:#cdcdcd"></div>
<svg style="left:805px;top:134px" width="11" height="8" viewBox="0 0 11 8"><path d="M1.5 6.5L5.5 2.5L9.5 6.5" fill="none" stroke="#606060" stroke-width="1.6"/></svg>
<svg style="left:805px;top:741px" width="11" height="8" viewBox="0 0 11 8"><path d="M1.5 1.5L5.5 5.5L9.5 1.5" fill="none" stroke="#606060" stroke-width="1.6"/></svg>
<div style="left:820px;top:128px;width:1px;height:626px;background:#fff"></div>
<div style="left:826px;top:87px;width:34px;height:672px;background:#f0f0f0"></div>
<div style="left:826px;top:87px;width:1px;height:672px;background:#a0a0a0"></div>
<div style="left:827px;top:87px;width:1px;height:672px;background:#5a5a5a"></div>
<div style="left:826px;top:87px;width:34px;height:1px;background:#5a5a5a"></div>
<div style="left:828px;top:88px;width:32px;height:1px;background:#fff"></div>
<div style="left:828px;top:88px;width:1px;height:671px;background:#fff"></div>
<div style="left:860px;top:87px;width:1px;height:672px;background:#fff"></div>
<div style="left:858px;top:89px;width:1px;height:41px;background:#b4b4b4"></div>
<div style="left:831px;top:130px;width:27px;height:1px;background:#6a6a6a;border-radius:1px"></div>
<div style="left:830px;top:131px;width:29px;height:1px;background:#fff"></div>
<div style="left:858px;top:132px;width:1px;height:35px;background:#b4b4b4"></div>
<div style="left:831px;top:167px;width:27px;height:1px;background:#6a6a6a;border-radius:1px"></div>
<div style="left:830px;top:168px;width:29px;height:1px;background:#fff"></div>
<div style="left:858px;top:169px;width:1px;height:35px;background:#b4b4b4"></div>
<div style="left:831px;top:204px;width:27px;height:1px;background:#6a6a6a;border-radius:1px"></div>
<div style="left:830px;top:205px;width:29px;height:1px;background:#fff"></div>
<div style="left:858px;top:206px;width:1px;height:36px;background:#b4b4b4"></div>
<div style="left:831px;top:242px;width:27px;height:1px;background:#6a6a6a;border-radius:1px"></div>
<div style="left:830px;top:243px;width:29px;height:1px;background:#fff"></div>
<div style="left:858px;top:244px;width:1px;height:36px;background:#b4b4b4"></div>
<div style="left:831px;top:280px;width:27px;height:1px;background:#6a6a6a;border-radius:1px"></div>
<div style="left:830px;top:281px;width:29px;height:1px;background:#fff"></div>
<div style="left:858px;top:282px;width:1px;height:36px;background:#b4b4b4"></div>
<div style="left:831px;top:318px;width:27px;height:1px;background:#6a6a6a;border-radius:1px"></div>
<div style="left:830px;top:319px;width:29px;height:1px;background:#fff"></div>
<div style="left:858px;top:320px;width:1px;height:35px;background:#b4b4b4"></div>
<div style="left:831px;top:355px;width:27px;height:1px;background:#6a6a6a;border-radius:1px"></div>
<div style="left:830px;top:356px;width:29px;height:1px;background:#fff"></div>
<div style="left:858px;top:357px;width:1px;height:36px;background:#b4b4b4"></div>
<div style="left:831px;top:393px;width:27px;height:1px;background:#6a6a6a;border-radius:1px"></div>
<div style="left:830px;top:394px;width:29px;height:1px;background:#fff"></div>
<div style="left:858px;top:395px;width:1px;height:37px;background:#b4b4b4"></div>
<div style="left:831px;top:432px;width:27px;height:1px;background:#6a6a6a;border-radius:1px"></div>
<div style="left:830px;top:433px;width:29px;height:1px;background:#fff"></div>
<div style="left:858px;top:434px;width:1px;height:35px;background:#b4b4b4"></div>
<div style="left:831px;top:469px;width:27px;height:1px;background:#6a6a6a;border-radius:1px"></div>
<div style="left:830px;top:470px;width:29px;height:1px;background:#fff"></div>
<div style="left:858px;top:471px;width:1px;height:36px;background:#b4b4b4"></div>
<div style="left:831px;top:507px;width:27px;height:1px;background:#6a6a6a;border-radius:1px"></div>
<div style="left:830px;top:508px;width:29px;height:1px;background:#fff"></div>
<div style="left:858px;top:509px;width:1px;height:36px;background:#b4b4b4"></div>
<div style="left:831px;top:545px;width:27px;height:1px;background:#6a6a6a;border-radius:1px"></div>
<div style="left:830px;top:546px;width:29px;height:1px;background:#fff"></div>
<div style="left:858px;top:546px;width:1px;height:212px;background:#a8a8a8"></div>
<svg style="left:830px;top:94px" width="28" height="26" viewBox="0 0 28 26"><defs><linearGradient id="bm1" x1="0" y1="0" x2="1" y2="0"><stop offset="0" stop-color="#4a88e0"/><stop offset="0.6" stop-color="#a8ccf8"/><stop offset="1" stop-color="#d0e6ff"/></linearGradient></defs><rect x="1" y="6" width="13" height="17" fill="url(#bm1)"/><rect x="1" y="6" width="2" height="17" fill="#0a3a8a"/><rect x="12" y="6" width="2" height="17" fill="#0a3a8a"/><path d="M18.5 2h3v2.5h2.5v3h-2.5v2.5h-3v-2.5h-2.5v-3h2.5z" fill="#66ee00" stroke="#2a9a00" stroke-width="0.6"/></svg>
<svg style="left:830px;top:132px" width="28" height="26" viewBox="0 0 28 26"><defs><linearGradient id="bm2" x1="0" y1="0" x2="1" y2="0"><stop offset="0" stop-color="#4a88e0"/><stop offset="0.6" stop-color="#a8ccf8"/><stop offset="1" stop-color="#d0e6ff"/></linearGradient></defs><rect x="3" y="6" width="13" height="18" fill="url(#bm2)"/><rect x="3" y="6" width="2" height="18" fill="#0a3a8a"/><rect x="14" y="6" width="2" height="18" fill="#0a3a8a"/><path d="M18 9L25 2L27 4L20 11Z" fill="#f09020" stroke="#c06010" stroke-width="0.5"/><path d="M17 11L18 9L20 11Z" fill="#202020"/><rect x="20" y="14" width="2" height="2" fill="#2020e0"/><rect x="20" y="17" width="2" height="2" fill="#e02040"/><rect x="20" y="20" width="2" height="2" fill="#20d020"/></svg>
<svg style="left:834px;top:172px" width="22" height="22" viewBox="0 0 22 22"><path d="M2 2H19V19H2Z M2 10.5H19 M10.5 2V19" fill="none" stroke="#101010" stroke-width="1.6"/><circle cx="2" cy="2" r="1.8" fill="#e01010"/><circle cx="2" cy="10.5" r="1.8" fill="#e01010"/><circle cx="2" cy="19" r="1.8" fill="#e01010"/><circle cx="10.5" cy="2" r="1.8" fill="#e01010"/><circle cx="10.5" cy="10.5" r="1.8" fill="#e01010"/><circle cx="10.5" cy="19" r="1.8" fill="#e01010"/><circle cx="19" cy="2" r="1.8" fill="#e01010"/><circle cx="19" cy="10.5" r="1.8" fill="#e01010"/><circle cx="19" cy="19" r="1.8" fill="#e01010"/></svg>
<svg style="left:834px;top:210px" width="24" height="22" viewBox="0 0 24 22"><path d="M10 4.5H20V17.5H10" fill="none" stroke="#30d040" stroke-width="3"/><rect x="9" y="5" width="2.5" height="12" fill="#30d040"/><rect x="2.5" y="2.5" width="10" height="17" fill="none" stroke="#0000d0" stroke-width="2.4"/><circle cx="2.5" cy="2.5" r="1.2" fill="#e04020"/><circle cx="12.5" cy="2.5" r="1.2" fill="#e04020"/><circle cx="2.5" cy="19.5" r="1.2" fill="#e04020"/><circle cx="12.5" cy="19.5" r="1.2" fill="#e04020"/></svg>
<svg style="left:832px;top:246px" width="26" height="26" viewBox="0 0 26 26"><defs><linearGradient id="bm3" x1="0" y1="0" x2="1" y2="0"><stop offset="0" stop-color="#4a88e0"/><stop offset="0.6" stop-color="#a8ccf8"/><stop offset="1" stop-color="#d0e6ff"/></linearGradient></defs><rect x="1.5" y="9" width="9.5" height="14" fill="url(#bm3)"/><rect x="1.5" y="9" width="2" height="14" fill="#0a3a8a"/><rect x="9.0" y="9" width="2" height="14" fill="#0a3a8a"/><defs><linearGradient id="bm4" x1="0" y1="0" x2="1" y2="0"><stop offset="0" stop-color="#4a88e0"/><stop offset="0.6" stop-color="#a8ccf8"/><stop offset="1" stop-color="#d0e6ff"/></linearGradient></defs><rect x="14" y="1.5" width="9.5" height="13.5" fill="url(#bm4)"/><rect x="14" y="1.5" width="2" height="13.5" fill="#0a3a8a"/><rect x="21.5" y="1.5" width="2" height="13.5" fill="#0a3a8a"/><path d="M6 21L18 15.5" stroke="#101010" stroke-width="1.2"/><path d="M14.5 13.8L19.5 15L16 18.5Z" fill="#101010"/><circle cx="6" cy="22" r="1.6" fill="#50e050"/><circle cx="19" cy="15.3" r="1.3" fill="#e02020"/></svg>
<svg style="left:830px;top:284px" width="28" height="26" viewBox="0 0 28 26"><defs><linearGradient id="bm5" x1="0" y1="0" x2="1" y2="0"><stop offset="0" stop-color="#4a88e0"/><stop offset="0.6" stop-color="#a8ccf8"/><stop offset="1" stop-color="#d0e6ff"/></linearGradient></defs><rect x="3" y="4.5" width="13" height="18.5" fill="url(#bm5)"/><rect x="3" y="4.5" width="2" height="18.5" fill="#0a3a8a"/><rect x="14" y="4.5" width="2" height="18.5" fill="#0a3a8a"/><rect x="7.8" y="3" width="3" height="3" fill="#e01010"/><rect x="7.8" y="10.5" width="3" height="3" fill="#e01010"/><rect x="7.8" y="21" width="3" height="3" fill="#e01010"/><rect x="17.5" y="2" width="8" height="8" fill="#fafafa"/><rect x="18.5" y="10" width="8" height="1" fill="#c8c8c8"/><path d="M20.5 3h2v2.2h2.2v2h-2.2v2.2h-2v-2.2h-2.2v-2h2.2z" fill="#e01010"/></svg>
<svg style="left:835px;top:325px" width="20" height="19" viewBox="0 0 20 19"><path d="M1.5 5.5H5L7 2.5H12L14 5.5H16.5V16.5H1.5Z" fill="#1a1a1a" stroke="#000" stroke-width="1"/><rect x="14" y="4" width="2" height="1.5" fill="#303030"/><circle cx="9" cy="10.5" r="4.3" fill="#505050" stroke="#e8e8e8" stroke-width="0.9"/><circle cx="9" cy="10.5" r="2.3" fill="#2a2a2a" stroke="#d0d0d0" stroke-width="0.7"/><circle cx="9" cy="10.5" r="0.8" fill="#c0c0c0"/><rect x="2.5" y="17" width="15" height="1.5" fill="#909090" opacity="0.6"/></svg>
<svg style="left:832px;top:360px" width="26" height="26" viewBox="0 0 26 26"><defs><linearGradient id="bm6" x1="0" y1="0" x2="1" y2="0"><stop offset="0" stop-color="#4a88e0"/><stop offset="0.6" stop-color="#a8ccf8"/><stop offset="1" stop-color="#d0e6ff"/></linearGradient></defs><rect x="2" y="4" width="10" height="17" fill="url(#bm6)"/><rect x="2" y="4" width="2" height="17" fill="#0a3a8a"/><rect x="10" y="4" width="2" height="17" fill="#0a3a8a"/><rect x="12" y="8" width="2" height="7" fill="#e01020"/><rect x="14" y="8" width="9" height="7" fill="#a8d0f8"/><rect x="14" y="8" width="9" height="1.4" fill="#0a3a8a"/><rect x="14" y="13.6" width="9" height="1.4" fill="#0a3a8a"/></svg>
<svg style="left:833px;top:398px" width="24" height="24" viewBox="0 0 24 24"><path d="M3.5 20.5L21 2.5" stroke="#101010" stroke-width="1.4"/><path d="M1 12.5H23" stroke="#101010" stroke-width="1.5"/><path d="M7.5 9.5L10.5 6.5H17.5V13.5L14.5 16.5H7.5Z" fill="#20c8d8"/><rect x="7.5" y="9.5" width="7" height="7" fill="#30e0f0"/><path d="M14.5 9.5L17.5 6.5" stroke="#10a0b0" stroke-width="0.8"/><path d="M7.5 9.5H14.5V16.5" fill="none" stroke="#10a0b0" stroke-width="0.8"/></svg>
<svg style="left:833px;top:436px" width="24" height="24" viewBox="0 0 24 24"><path d="M3 19L20 4" stroke="#101010" stroke-width="1.3"/><path d="M2 6L21 14" stroke="#303030" stroke-width="1" stroke-dasharray="2 1"/><circle cx="3" cy="19" r="2.3" fill="#e02020"/><circle cx="20" cy="4" r="2.3" fill="#e02020"/><circle cx="11.5" cy="11" r="2.3" fill="#d02020"/></svg>
<svg style="left:831px;top:474px" width="28" height="28" viewBox="0 0 28 28"><path d="M3 14Q2 20 5 22.5Q7 24 12 24H20Q25 24 25.5 19L25 15L20 20H6Z" fill="#b88840" stroke="#805818" stroke-width="0.9"/><path d="M5 9L7 7H19V17L16 20H5Z" fill="#dcdcdc"/><rect x="5" y="9" width="11" height="11" fill="#e4e4e4"/><path d="M16 9L19 7V17L16 20Z" fill="#a8a8a8"/><path d="M5 20.3H16L20 17" fill="none" stroke="#202020" stroke-width="1"/><path d="M19.5 3h3v2.5h2.5v3h-2.5v2.5h-3v-2.5h-2.5v-3h2.5z" fill="#66ee00" stroke="#2a9a00" stroke-width="0.6"/></svg>
<svg style="left:834px;top:516px" width="24" height="20" viewBox="0 0 24 20"><rect x="1" y="2.5" width="17" height="13" fill="#f8f8f8" stroke="#b0b0b0" stroke-width="0.8"/><rect x="1" y="1.5" width="17" height="1.8" fill="#0a2a7a"/><rect x="2" y="15.5" width="17" height="1.5" fill="#909090"/><circle cx="15" cy="10.5" r="4.6" fill="#5898e8" stroke="#3070c0" stroke-width="0.6"/><rect x="14.2" y="9.3" width="1.8" height="4.2" fill="#0a2a7a"/><circle cx="15.1" cy="7.6" r="1" fill="#0a2a7a"/></svg>
<div style="left:860px;top:88px;width:205px;height:671px;background:#f0f0f0;border-left:1px solid #fff"></div>
<div style="left:1063px;top:88px;width:1px;height:671px;background:#fff"></div>
<div style="left:1064px;top:53px;width:1px;height:706px;background:#404040"></div>
<div style="left:865px;top:90px;width:180px;height:18px;background:linear-gradient(#88d8ec,#50c0dc)"></div>
<div class="t" style="left:865px;top:92px;width:180px;text-align:center;color:#1a2494;-webkit-text-stroke:0.08px #1a2494;font-size:12px;transform:scaleX(0.905);transform-origin:50% 0">Zestawienie materiału</div>
<div style="left:870px;top:127px;width:191px;height:153px;border:1px solid #a8a8a8;box-shadow:inset 1px 1px 0 #fff, 1px 1px 0 #fff"></div>
<div style="left:876px;top:120px;width:70px;height:14px;background:#f0f0f0"></div>
<div class="t" style="left:878px;top:121px;font-size:11px;letter-spacing:-0.2px">Numerowanie</div>
<svg style="left:898px;top:143px" width="12" height="12" viewBox="0 0 12 12"><circle cx="6" cy="6" r="5" fill="#fff" stroke="#ececec"/><path d="M1.6 8.8A5 5 0 0 1 8.8 1.6" fill="none" stroke="#767676" stroke-width="1.5"/><circle cx="6" cy="6" r="2" fill="#000"/></svg>
<div class="t" style="left:914px;top:143px;font-size:11px">Ciągłe</div>
<svg style="left:898px;top:164px" width="12" height="12" viewBox="0 0 12 12"><circle cx="6" cy="6" r="5" fill="#fff" stroke="#ececec"/><path d="M1.6 8.8A5 5 0 0 1 8.8 1.6" fill="none" stroke="#767676" stroke-width="1.5"/></svg>
<div class="t" style="left:914px;top:164px;font-size:11px;letter-spacing:-0.2px">Główna/Podrzędna</div>
<svg style="left:898px;top:186px" width="12" height="12" viewBox="0 0 12 12"><circle cx="6" cy="6" r="5" fill="#fff" stroke="#ececec"/><path d="M1.6 8.8A5 5 0 0 1 8.8 1.6" fill="none" stroke="#767676" stroke-width="1.5"/></svg>
<div class="t" style="left:914px;top:186px;font-size:11px">Sekcjami</div>
<div class="t" style="left:896px;top:214px;font-size:11px">Profil</div>
<div class="t" style="left:896px;top:233px;font-size:11px">Blachy</div>
<div class="t" style="left:896px;top:255px;font-size:11px;letter-spacing:-0.2px">Kątowniki</div>
<div style="left:960px;top:208px;width:59px;height:19px;background:#f0f0f0;border-top:1px solid #a0a0a0;border-left:1px solid #a0a0a0;border-right:1px solid #fff;border-bottom:1px solid #fff;box-shadow:inset 1px 1px 0 #696969"></div>
<div style="left:960px;top:231px;width:59px;height:19px;background:#f0f0f0;border-top:1px solid #a0a0a0;border-left:1px solid #a0a0a0;border-right:1px solid #fff;border-bottom:1px solid #fff;box-shadow:inset 1px 1px 0 #696969"></div>
<div style="left:960px;top:251px;width:59px;height:19px;background:#f0f0f0;border-top:1px solid #a0a0a0;border-left:1px solid #a0a0a0;border-right:1px solid #fff;border-bottom:1px solid #fff;box-shadow:inset 1px 1px 0 #696969"></div>
<div class="t" style="left:894px;top:293px;font-size:11px">Materiał</div>
<div style="left:951px;top:290px;width:80px;height:20px;background:#fff;border-top:1px solid #a0a0a0;border-left:1px solid #a0a0a0;border-right:1px solid #fff;border-bottom:1px solid #fff;box-shadow:inset 1px 1px 0 #696969"></div>
<div style="left:1013px;top:292px;width:17px;height:16px;background:#f0f0f0;border-right:1px solid #696969;border-bottom:1px solid #696969;box-shadow:inset 1px 1px 0 #fff, inset -1px -1px 0 #a0a0a0"></div>
<svg style="left:1017px;top:298px" width="8" height="5" viewBox="0 0 8 5"><path d="M0 0H7L3.5 4Z" fill="#000"/></svg>
<div class="t" style="left:956px;top:293px;font-size:11px">S235JR</div>
<div class="btn" style="left:885px;top:316px;width:64px;height:21px;"><div class="t s" style="left:0;top:3px">Przypisz</div></div>
<div class="btn" style="left:951px;top:316px;width:84px;height:21px;"><div class="t s" style="left:0;top:3px">Dodaj</div></div>
<div class="t" style="left:900px;top:349px;font-size:11px">Grupa</div>
<div style="left:901px;top:367px;width:122px;height:20px;background:#fff;border-top:1px solid #a0a0a0;border-left:1px solid #a0a0a0;border-right:1px solid #fff;border-bottom:1px solid #fff;box-shadow:inset 1px 1px 0 #696969"></div>
<div style="left:1005px;top:369px;width:17px;height:16px;background:#f0f0f0;border-right:1px solid #696969;border-bottom:1px solid #696969;box-shadow:inset 1px 1px 0 #fff, inset -1px -1px 0 #a0a0a0"></div>
<svg style="left:1009px;top:375px" width="8" height="5" viewBox="0 0 8 5"><path d="M0 0H7L3.5 4Z" fill="#000"/></svg>
<div class="t" style="left:906px;top:370px;font-size:11px">*wszystko*</div>
<div class="btn" style="left:898px;top:396px;width:126px;height:23px;"><div class="t s" style="left:0;top:4px">Pozycjonowanie</div></div>
<div class="btn" style="left:898px;top:422px;width:126px;height:23px;"><div class="t s" style="left:0;top:4px">Znajdź identyczne</div></div>
<div class="btn" style="left:897px;top:453px;width:127px;height:23px;border:2px solid #505050;"><div class="t s" style="left:0;top:3px">Edytuj luki numeracji</div></div>
<div style="left:888px;top:486px;width:149px;height:90px;border:1px solid #a8a8a8;box-shadow:inset 1px 1px 0 #fff, 1px 1px 0 #fff"></div>
<div style="left:894px;top:479px;width:108px;height:14px;background:#f0f0f0"></div>
<div class="t" style="left:896px;top:480px;font-size:11px;letter-spacing:-0.2px">Pozycje zablokowane</div>
<div class="btn" style="left:897px;top:500px;width:126px;height:23px;"><div class="t s" style="left:0;top:4px">Ustaw jako stałe</div></div>
<div class="btn" style="left:897px;top:526px;width:126px;height:23px;"><div class="t s" style="left:0;top:4px">Ustaw jako zmienne</div></div>
<div style="left:897px;top:553px;width:13px;height:13px;background:#fff;border-top:2px solid #707070;border-left:2px solid #707070;border-right:1px solid #f8f8f8;border-bottom:1px solid #f8f8f8"></div>
<div class="t" style="left:915px;top:553px;font-size:11px">Tylko pokaż</div>
<div class="btn" style="left:898px;top:583px;width:126px;height:23px;"><div class="t s" style="left:0;top:4px">Eksport Excel</div></div>
<div class="btn" style="left:898px;top:609px;width:126px;height:23px;"><div class="t s" style="left:0;top:4px">Eksport CSV</div></div>
<div class="btn" style="left:898px;top:635px;width:126px;height:23px;"><div class="t s" style="left:0;top:4px">Drukuj</div></div>
<div style="left:865px;top:685px;width:194px;height:20px;border:1px solid #000;background:linear-gradient(#f4f4f4,#d8d8d8)"></div>
<div style="left:866px;top:686px;width:95px;height:18px;background:linear-gradient(#70e070,#30b830);border-right:1px solid #208020"></div>
<div class="t" style="left:866px;top:688px;width:95px;text-align:center;font-size:11px">Wielk. punktów</div>
<div class="t" style="left:962px;top:688px;width:96px;text-align:center;font-size:11px">Wielk. strzałek</div>
<div style="left:884px;top:716px;width:167px;height:3px;background:#8a8a8a;border-bottom:1px solid #fff"></div>
<div style="left:873px;top:707px;width:11px;height:22px;background:#f0f0f0;border-right:1px solid #696969;border-bottom:1px solid #696969;border-top:1px solid #fff;border-left:1px solid #fff;box-shadow:inset -1px -1px 0 #a0a0a0"></div>
<div style="left:1px;top:759px;width:1064px;height:19px;background:#f0f0f0"></div>
<div class="t" style="left:3px;top:761px;letter-spacing:-0.2px">Zestawienie materiału</div>
<div style="left:736px;top:759px;width:1px;height:19px;background:#a0a0a0"></div>
<div style="left:737px;top:759px;width:1px;height:19px;background:#fff"></div>
<div style="left:916px;top:759px;width:1px;height:19px;background:#a0a0a0"></div>
<div style="left:917px;top:759px;width:1px;height:19px;background:#fff"></div>
<div style="left:974px;top:759px;width:1px;height:19px;background:#a0a0a0"></div>
<div style="left:975px;top:759px;width:1px;height:19px;background:#fff"></div>
<div style="left:1004px;top:759px;width:1px;height:19px;background:#a0a0a0"></div>
<div style="left:1005px;top:759px;width:1px;height:19px;background:#fff"></div>
<div style="left:1034px;top:759px;width:1px;height:19px;background:#a0a0a0"></div>
<div style="left:1035px;top:759px;width:1px;height:19px;background:#fff"></div>
<div style="left:737px;top:758px;width:328px;height:1px;background:#fff"></div>
<svg style="left:1050px;top:764px" width="14" height="14" viewBox="0 0 14 14"><path d="M13 2L2 13M13 6L6 13M13 10L10 13" stroke="#a0a0a0" stroke-width="1"/></svg>
<div style="left:0px;top:87px;width:2px;height:692px;background:#2f72a8"></div></body></html>
